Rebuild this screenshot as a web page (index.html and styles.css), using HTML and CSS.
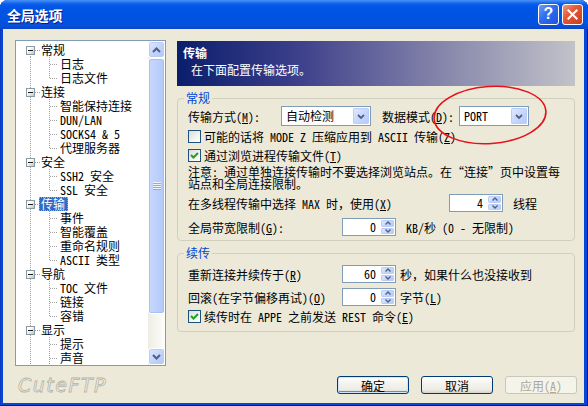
FILE: index.html
```html
<!DOCTYPE html>
<html lang="zh-CN">

<head>
    <meta charset="UTF-8">
    <title>全局选项</title>
    <link rel="stylesheet" href="styles.css">
</head>

<body>
    <div class="window">
        <div class="titlebar">
            <span class="caption">全局选项</span>
            <div class="caption-buttons">
                <div class="cap-btn help">?</div>
                <div class="cap-btn close">
                    <svg width="21" height="21" viewBox="0 0 21 21">
                        <path d="M6 6 L15 15 M15 6 L6 15" stroke="#fff" stroke-width="2.2" stroke-linecap="square" />
                    </svg>
                </div>
            </div>
        </div>

        <div class="client">
            <div class="main">
                <div class="tree-pane">
                    <div class="tree">
                        <div class="row top first"><span class="exp"></span><span class="label">常规</span></div>
                        <div class="row child"><span class="label">日志</span></div>
                        <div class="row child last"><span class="label">日志文件</span></div>
                        <div class="row top"><span class="exp"></span><span class="label">连接</span></div>
                        <div class="row child"><span class="label">智能保持连接</span></div>
                        <div class="row child"><span class="label">DUN/LAN</span></div>
                        <div class="row child"><span class="label">SOCKS4 &amp; 5</span></div>
                        <div class="row child last"><span class="label">代理服务器</span></div>
                        <div class="row top"><span class="exp"></span><span class="label">安全</span></div>
                        <div class="row child"><span class="label">SSH2 安全</span></div>
                        <div class="row child last"><span class="label">SSL 安全</span></div>
                        <div class="row top"><span class="exp"></span><span class="label selected">传输</span></div>
                        <div class="row child"><span class="label">事件</span></div>
                        <div class="row child"><span class="label">智能覆盖</span></div>
                        <div class="row child"><span class="label">重命名规则</span></div>
                        <div class="row child last"><span class="label">ASCII 类型</span></div>
                        <div class="row top"><span class="exp"></span><span class="label">导航</span></div>
                        <div class="row child"><span class="label">TOC 文件</span></div>
                        <div class="row child"><span class="label">链接</span></div>
                        <div class="row child last"><span class="label">容错</span></div>
                        <div class="row top"><span class="exp"></span><span class="label">显示</span></div>
                        <div class="row child"><span class="label">提示</span></div>
                        <div class="row child"><span class="label">声音</span></div>
                    </div>
                    <div class="scrollbar">
                        <div class="sb-btn">
                            <svg width="9" height="6" viewBox="0 0 9 6">
                                <path d="M1 5 L4.5 1.5 L8 5" fill="none" stroke="#4d6185" stroke-width="2" />
                            </svg>
                        </div>
                        <div class="sb-thumb"><span class="grip"></span></div>
                        <div class="sb-track"></div>
                        <div class="sb-btn">
                            <svg width="9" height="6" viewBox="0 0 9 6">
                                <path d="M1 1 L4.5 4.5 L8 1" fill="none" stroke="#4d6185" stroke-width="2" />
                            </svg>
                        </div>
                    </div>
                </div>

                <div class="content">
                    <div class="banner">
                        <div class="banner-title">传输</div>
                        <div class="banner-sub">在下面配置传输选项。</div>
                    </div>

                    <fieldset class="group general">
                        <legend>常规</legend>
                        <div class="field-row first-row">
                            <span class="field-label w-mode">传输方式(<u>M</u>):</span>
                            <div class="combo w-auto">
                                <span class="combo-value">自动检测</span>
                                <span class="combo-btn">
                                    <svg width="8" height="5" viewBox="0 0 8 5">
                                        <path d="M1 1 L4 4 L7 1" fill="none" stroke="#4d6185" stroke-width="1.8" />
                                    </svg>
                                </span>
                            </div>
                            <span class="field-label w-data">数据模式(<u>D</u>):</span>
                            <div class="combo w-port">
                                <span class="combo-value">PORT</span>
                                <span class="combo-btn">
                                    <svg width="8" height="5" viewBox="0 0 8 5">
                                        <path d="M1 1 L4 4 L7 1" fill="none" stroke="#4d6185" stroke-width="1.8" />
                                    </svg>
                                </span>
                            </div>
                        </div>
                        <label class="check-row">
                            <span class="check"></span>
                            <span>可能的话将 MODE Z 压缩应用到 ASCII 传输(<u>Z</u>)</span>
                        </label>
                        <label class="check-row">
                            <span class="check checked">
                                <svg width="11" height="11" viewBox="0 0 11 11">
                                    <path d="M2 5 L4.5 7.5 L9 3" fill="none" stroke="#21a121" stroke-width="2" />
                                </svg>
                            </span>
                            <span>通过浏览进程传输文件(<u>T</u>)</span>
                        </label>
                        <div class="note">注意: 通过单独连接传输时不要选择浏览站点。在“连接”页中设置每<br>站点和全局连接限制。</div>
                        <div class="field-row spaced">
                            <span class="field-label w-max">在多线程传输中选择 MAX 时，使用(<u>X</u>)</span>
                            <div class="spin">
                                <span class="spin-value">4</span>
                                <span class="spin-btns">
                                    <span class="spin-btn"><svg width="6" height="4" viewBox="0 0 6 4"><path d="M0.5 3.5 L3 1 L5.5 3.5" fill="none" stroke="#4d6185" stroke-width="1.4" /></svg></span>
                                    <span class="spin-btn"><svg width="6" height="4" viewBox="0 0 6 4"><path d="M0.5 0.5 L3 3 L5.5 0.5" fill="none" stroke="#4d6185" stroke-width="1.4" /></svg></span>
                                </span>
                            </div>
                            <span class="unit">线程</span>
                        </div>
                        <div class="field-row spaced">
                            <span class="field-label w-spin">全局带宽限制(<u>G</u>):</span>
                            <div class="spin">
                                <span class="spin-value">0</span>
                                <span class="spin-btns">
                                    <span class="spin-btn"><svg width="6" height="4" viewBox="0 0 6 4"><path d="M0.5 3.5 L3 1 L5.5 3.5" fill="none" stroke="#4d6185" stroke-width="1.4" /></svg></span>
                                    <span class="spin-btn"><svg width="6" height="4" viewBox="0 0 6 4"><path d="M0.5 0.5 L3 3 L5.5 0.5" fill="none" stroke="#4d6185" stroke-width="1.4" /></svg></span>
                                </span>
                            </div>
                            <span class="unit">KB/秒 (0 - 无限制)</span>
                        </div>
                    </fieldset>

                    <fieldset class="group resume">
                        <legend>续传</legend>
                        <div class="field-row first-row">
                            <span class="field-label w-spin">重新连接并续传于(<u>R</u>)</span>
                            <div class="spin">
                                <span class="spin-value">60</span>
                                <span class="spin-btns">
                                    <span class="spin-btn"><svg width="6" height="4" viewBox="0 0 6 4"><path d="M0.5 3.5 L3 1 L5.5 3.5" fill="none" stroke="#4d6185" stroke-width="1.4" /></svg></span>
                                    <span class="spin-btn"><svg width="6" height="4" viewBox="0 0 6 4"><path d="M0.5 0.5 L3 3 L5.5 0.5" fill="none" stroke="#4d6185" stroke-width="1.4" /></svg></span>
                                </span>
                            </div>
                            <span class="unit tight">秒，如果什么也没接收到</span>
                        </div>
                        <div class="field-row second-row">
                            <span class="field-label w-spin">回滚(在字节偏移再试)(<u>O</u>)</span>
                            <div class="spin">
                                <span class="spin-value">0</span>
                                <span class="spin-btns">
                                    <span class="spin-btn"><svg width="6" height="4" viewBox="0 0 6 4"><path d="M0.5 3.5 L3 1 L5.5 3.5" fill="none" stroke="#4d6185" stroke-width="1.4" /></svg></span>
                                    <span class="spin-btn"><svg width="6" height="4" viewBox="0 0 6 4"><path d="M0.5 0.5 L3 3 L5.5 0.5" fill="none" stroke="#4d6185" stroke-width="1.4" /></svg></span>
                                </span>
                            </div>
                            <span class="unit tight">字节(<u>L</u>)</span>
                        </div>
                        <label class="check-row short">
                            <span class="check checked">
                                <svg width="11" height="11" viewBox="0 0 11 11">
                                    <path d="M2 5 L4.5 7.5 L9 3" fill="none" stroke="#21a121" stroke-width="2" />
                                </svg>
                            </span>
                            <span>续传时在 APPE 之前发送 REST 命令(<u>E</u>)</span>
                        </label>
                    </fieldset>
                </div>
            </div>

            <div class="footer">
                <div class="logo">CuteFTP</div>
                <div class="buttons">
                    <div class="btn default">确定</div>
                    <div class="btn">取消</div>
                    <div class="btn disabled">应用(<u>A</u>)</div>
                </div>
            </div>
        </div>

        <svg class="mark" width="118" height="62" viewBox="0 0 118 62">
            <ellipse cx="59" cy="31" rx="56" ry="28.5" transform="rotate(-4 59 31)" fill="none" stroke="#e8101a"
                stroke-width="1.6" />
        </svg>
    </div>
</body>

</html>
```

FILE: styles.css
```css
:root {
    --xp-face: #ece9d8;
    --xp-edit-border: #7f9db9;
    --xp-group-border: #d0d0bf;
    --xp-group-text: #0046d5;
    --xp-arrow: #4d6185;
    --xp-select: #316ac5;

    --dot-v: repeating-linear-gradient(to bottom, #a0a0a0 0 1px, transparent 1px 2px);
    --dot-h: repeating-linear-gradient(to right, #a0a0a0 0 1px, transparent 1px 2px);
}

* {
    box-sizing: border-box;
}

body {
    margin: 0;
    width: 588px;
    height: 406px;
    overflow: hidden;
    background: #ffffff;
    font-family: "Noto Sans Mono CJK SC", "Noto Sans CJK SC", "Liberation Mono", monospace;
    font-size: 12px;
    color: #000000;
}

u {
    text-decoration: underline;
    text-underline-offset: 1px;
}

.window {
    position: relative;
    display: flex;
    flex-direction: column;
    width: 588px;
    height: 406px;
    background: #0846d8;
    border-radius: 8px 8px 0 0;
    box-shadow: inset 0 -1px 0 #001a9c, inset 1px 0 0 #0a3bc0, inset -1px 0 0 #001a9c;
}

/* title bar */

.titlebar {
    display: flex;
    align-items: center;
    justify-content: space-between;
    height: 29px;
    padding: 0 5px 0 7px;
    border-radius: 8px 8px 0 0;
    background: linear-gradient(to bottom, #4a92f8 0, #2a78f2 2px, #0a5ce9 4px, #0055e5 8px, #0052e0 22px, #0a4ed6 26px, #0a45c8 29px);
}

.caption {
    font-family: "Noto Sans CJK SC", sans-serif;
    font-size: 14px;
    font-weight: 700;
    color: #ffffff;
    letter-spacing: -0.2px;
    text-shadow: 1px 1px 0 #0a1e8a;
}

.caption-buttons {
    display: flex;
    gap: 3px;
    margin-top: -1px;
}

.cap-btn {
    display: flex;
    align-items: center;
    justify-content: center;
    width: 21px;
    height: 21px;
    border: 1px solid #ffffff;
    border-radius: 3px;
}

.cap-btn.help {
    background: linear-gradient(135deg, #6f9cf7 0%, #2f6cee 45%, #1b55de 100%);
    font-family: "Liberation Sans", sans-serif;
    font-weight: 700;
    font-size: 16px;
    line-height: 1;
    color: #ffffff;
}

.cap-btn.close {
    background: linear-gradient(135deg, #f29a7c 0%, #e2583a 40%, #c8401c 100%);
}

/* client area */

.client {
    display: flex;
    flex-direction: column;
    flex: 1;
    margin: 0 4px 3px 3px;
    padding: 11px 9px 0 12px;
    background: var(--xp-face);
}

.main {
    display: flex;
    gap: 11px;
}

/* tree */

.tree-pane {
    display: flex;
    width: 151px;
    height: 326px;
    border: 1px solid var(--xp-edit-border);
    background: #ffffff;
}

.tree {
    flex: 1;
    padding-top: 2px;
    overflow: hidden;
}

.row {
    display: flex;
    align-items: center;
    height: 14px;
    background-repeat: no-repeat;
    white-space: nowrap;
}

.row.top {
    padding-left: 10px;
    background-image: var(--dot-v), var(--dot-h);
    background-position: 14px 0, 19px 7px;
    background-size: 1px 14px, 5px 1px;
}

.row.top.first {
    background-position: 14px 7px, 19px 7px;
    background-size: 1px 7px, 5px 1px;
}

.row.child {
    padding-left: 44px;
    background-image: var(--dot-v), var(--dot-v), var(--dot-h);
    background-position: 14px 0, 33px 0, 34px 7px;
    background-size: 1px 14px, 1px 14px, 8px 1px;
}

.row.child.last {
    background-size: 1px 14px, 1px 8px, 8px 1px;
}

.exp {
    position: relative;
    flex: none;
    width: 9px;
    height: 9px;
    margin-right: 6px;
    border: 1px solid #8a9ba6;
    background: linear-gradient(135deg, #ffffff 30%, #c8c6b8 100%);
}

.exp::after {
    content: "";
    position: absolute;
    left: 1px;
    top: 3px;
    width: 5px;
    height: 1px;
    background: #1c1c1c;
}

.label {
    margin-left: -2px;
    padding: 0 2px;
    line-height: 14px;
}

.label.selected {
    padding: 0 3px 0 2px;
    background: var(--xp-select);
    color: #ffffff;
    outline: 1px dotted #c8a46a;
    outline-offset: -1px;
}

.scrollbar {
    display: flex;
    flex-direction: column;
    width: 17px;
    background: linear-gradient(to right, #eeede5, #fdfdfa);
}

.sb-btn {
    display: flex;
    align-items: center;
    justify-content: center;
    height: 17px;
    border: 1px solid #ffffff;
    border-radius: 3px;
    background: linear-gradient(135deg, #dfe9fe 0%, #c1d3fb 55%, #b0c6f6 100%);
    box-shadow: inset 0 0 0 1px #bccdf5;
}

.sb-thumb {
    display: flex;
    align-items: center;
    justify-content: center;
    height: 256px;
    border: 1px solid #ffffff;
    border-radius: 3px;
    background: linear-gradient(to right, #c9d8fc, #bacffb 60%, #b2c8f7);
    box-shadow: inset 0 0 0 1px #a8bff3;
}

.grip {
    width: 8px;
    height: 8px;
    background: repeating-linear-gradient(to bottom, #eef3fe 0 1px, #8cabec 1px 2px);
}

.sb-track {
    flex: 1;
}

/* right side */

.content {
    display: flex;
    flex-direction: column;
    width: 398px;
}

.banner {
    height: 45px;
    margin-top: 1px;
    padding: 3px 6px;
    background: linear-gradient(to right, #0a1e6c 0%, #3c3f8a 30%, #8c8cae 70%, #c2c2ca 100%);
    color: #ffffff;
}

.banner-title {
    font-family: "Noto Sans CJK SC", sans-serif;
    font-weight: 700;
    line-height: 18px;
}

.banner-sub {
    padding-left: 8px;
    line-height: 16px;
}

.group {
    margin: 5px 0 0;
    padding: 0 9px 2px 10px;
    border: 1px solid var(--xp-group-border);
    border-radius: 4px;
    min-width: 0;
}

.group legend {
    margin-left: -4px;
    padding: 0 2px;
    line-height: 14px;
    color: var(--xp-group-text);
}

.group.resume {
    padding-bottom: 7px;
}

.field-row {
    display: flex;
    align-items: center;
    height: 22px;
    white-space: nowrap;
}

.field-row.spaced {
    margin-top: 2px;
}

.group.resume .field-row.first-row {
    margin-top: 3px;
}

.field-row.second-row {
    margin-top: 1px;
}

.field-label.w-mode {
    width: 93px;
}

.field-label.w-data {
    width: 77px;
    margin-left: 11px;
}

.field-label.w-max {
    width: 261px;
}

.field-label.w-spin {
    width: 154px;
}

.unit {
    margin-left: 10px;
}

.unit.tight {
    margin-left: 4px;
}

.combo {
    display: flex;
    height: 20px;
    border: 1px solid var(--xp-edit-border);
    background: #ffffff;
}

.combo.w-auto {
    width: 90px;
}

.combo.w-port {
    width: 70px;
}

.combo-value {
    flex: 1;
    padding-left: 4px;
    line-height: 18px;
}

.combo-btn {
    display: flex;
    align-items: center;
    justify-content: center;
    width: 16px;
    margin: 1px;
    border-radius: 2px;
    background: linear-gradient(135deg, #e3ebfe 0%, #c5d6fc 55%, #b3c8f7 100%);
    box-shadow: inset 0 0 0 1px #bccdf5;
}

.spin {
    display: flex;
    width: 54px;
    height: 18px;
    border: 1px solid var(--xp-edit-border);
    background: #ffffff;
}

.spin-value {
    flex: 1;
    padding-right: 4px;
    text-align: right;
    line-height: 16px;
}

.spin-btns {
    display: flex;
    flex-direction: column;
    gap: 1px;
    width: 15px;
    padding: 1px;
}

.spin-btn {
    display: flex;
    align-items: center;
    justify-content: center;
    flex: 1;
    border-radius: 2px;
    background: linear-gradient(135deg, #e3ebfe 0%, #c5d6fc 55%, #b3c8f7 100%);
    box-shadow: inset 0 0 0 1px #bccdf5;
}

.check-row {
    display: flex;
    align-items: center;
    gap: 3px;
    height: 19px;
    white-space: nowrap;
}

.check-row.short {
    height: 16px;
}

.check {
    display: flex;
    align-items: center;
    justify-content: center;
    flex: none;
    width: 13px;
    height: 13px;
    border: 1px solid #1c5180;
    background: linear-gradient(135deg, #dcdcd7 0%, #f4f4f0 60%, #ffffff 100%);
}

.note {
    margin-top: 1px;
    line-height: 12px;
    white-space: nowrap;
}

/* footer */

.footer {
    display: flex;
    align-items: center;
    justify-content: space-between;
    margin-top: 10px;
    height: 18px;
}

.logo {
    margin-left: 3px;
    font-family: "DejaVu Sans", sans-serif;
    font-style: italic;
    font-size: 19px;
    letter-spacing: 1.5px;
    color: #f7f6f0;
    -webkit-text-stroke: 0.8px #b4b2a4;
}

.buttons {
    display: flex;
    gap: 12px;
    margin-right: -2px;
}

.btn {
    display: flex;
    align-items: center;
    justify-content: center;
    width: 72px;
    height: 18px;
    border: 1px solid #003c74;
    border-radius: 3px;
    background: linear-gradient(to bottom, #ffffff 0%, #f4f3ee 40%, #ecebe6 80%, #d6d0c5 100%);
}

.btn.default {
    box-shadow: inset 0 0 0 1px #cee7ff, inset 0 -1px 0 1px #6982ee;
}

.btn.disabled {
    border-color: #c9c7ba;
    background: #f5f4ea;
    color: #aca899;
}

/* red ellipse drawn over the mode selector */

.mark {
    position: absolute;
    left: 431px;
    top: 84px;
}
```
